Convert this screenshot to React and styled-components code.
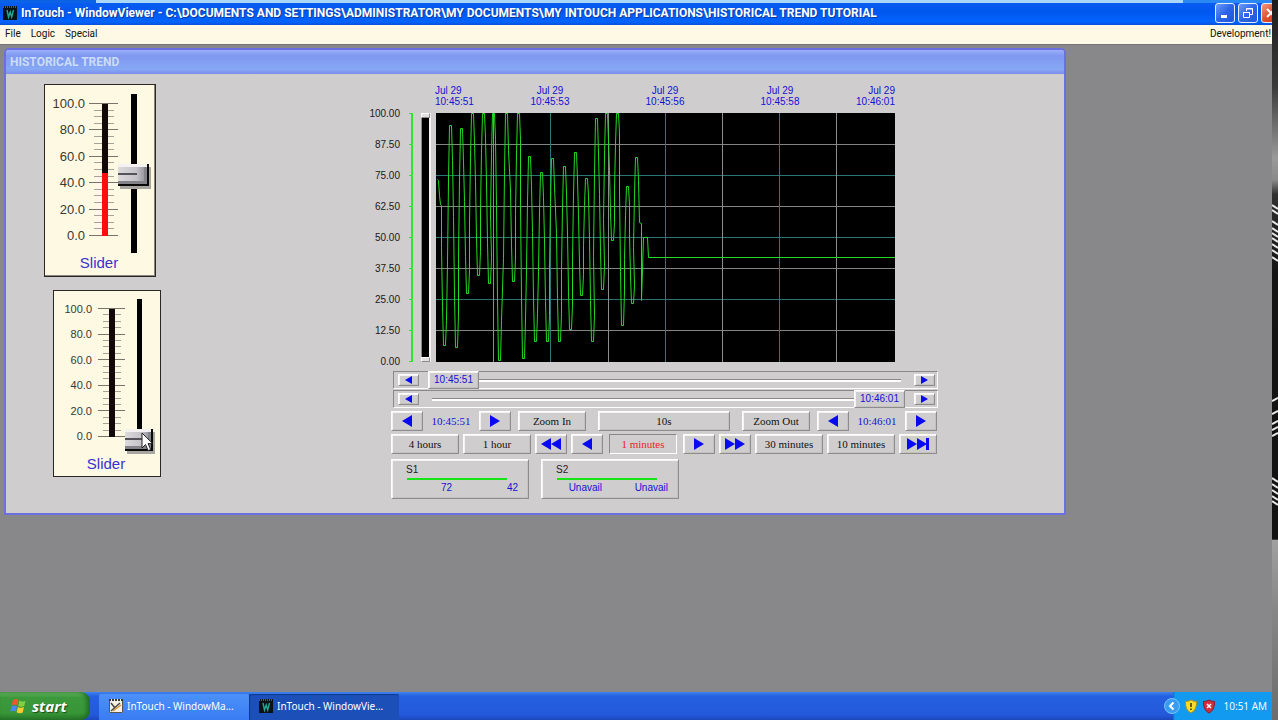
import React from "react";
import styled, { createGlobalStyle, css } from "styled-components";

const GlobalStyle = createGlobalStyle`
  * { box-sizing: border-box; }
  html, body, #root { height: 100%; }
  body { margin: 0; overflow: hidden; font-family: "Liberation Sans", Arial, sans-serif; font-size: 10px; }
  button, input { font: inherit; margin: 0; }
`;

const BLUE = "#1410d8";
const FACE = "#d0cdce";

const raised = css`
  border: 1px solid;
  border-color: #fff #8f8c8e #8f8c8e #fff;
  box-shadow: inset 1px 1px 0 #f5f3f3, inset -1px -1px 0 #c4c1c3;
`;
const sunken = css`
  border: 1px solid;
  border-color: #8a888a #fff #fff #8a888a;
`;

/* ---------- screen ---------- */

const Screen = styled.div`
  display: flex;
  height: 100vh;
`;
const Desktop = styled.div`
  flex: 1;
  min-width: 0;
  display: flex;
  flex-direction: column;
  background: #888789;
`;
const Wallpaper = styled.svg`
  position: relative;
  width: 6px;
  height: 100%;
  flex: none;
`;

/* ---------- application frame ---------- */

const TopEdge = styled.div`
  height: 3px;
  background: linear-gradient(90deg, #0a62e4 96px, #a9d8f8 96px, #a9d8f8 93%, #2a88f4 93%);
`;
const TitleBar = styled.header`
  height: 22px;
  display: flex;
  align-items: center;
  gap: 4px;
  padding: 0 0 2px 3px;
  overflow: hidden;
  background: linear-gradient(#0a5cf0, #0057ee 40%, #0264ff 85%, #0a50d8);
`;
const Title = styled.h1`
  flex: 1;
  margin: 0;
  font: bold 12px/18px Roboto, "Open Sans", sans-serif;
  color: #fff;
  text-shadow: 1px 1px 0 #0a3a9c;
  white-space: pre;
`;
const WindowButtons = styled.div`
  display: flex;
  gap: 3px;
  margin-right: -9px;
`;
const WindowButton = styled.button`
  width: 20px;
  height: 20px;
  padding: 0;
  display: grid;
  place-items: center;
  border: 1px solid #e4ecff;
  border-radius: 3px;
  background: ${(p) =>
    p.$close
      ? "linear-gradient(135deg, #f09a80, #e0502c 50%, #c83a18)"
      : "linear-gradient(135deg, #6c9cf8, #2c64e8 50%, #2058dc)"};
`;
const MenuBar = styled.nav`
  height: 19px;
  display: flex;
  align-items: center;
  gap: 10px;
  padding: 0 1px 2px 5px;
  background: #fdf9e4;
`;
const MenuItem = styled.button`
  padding: 0;
  border: 0;
  background: none;
  color: #111;
  font: 10px/14px Roboto, sans-serif;
  margin-left: ${(p) => (p.$end ? "auto" : "0")};
`;
const Workspace = styled.main`
  flex: 1;
  min-height: 0;
  padding: 3px 4px;
  border-top: 1px solid #74737a;
`;

/* ---------- trend window ---------- */

const TrendWindow = styled.section`
  width: 84%;
  border: 2px solid #6c6fe2;
  border-radius: 5px 5px 0 0;
  background: ${FACE};
  overflow: hidden;
`;
const TrendTitle = styled.h2`
  margin: 0;
  height: 24px;
  padding: 0 4px;
  font: bold 12px/24px Roboto, "Open Sans", sans-serif;
  color: #ccdcf8;
  background: linear-gradient(#9ab0fa, #7f97f0 25%, #86a8f4 80%, #7d8eec);
`;
const TrendBody = styled.div`
  display: grid;
  grid-template-columns: 325px minmax(0, 570px);
  padding: 10px 0 14px 38px;
`;
const GaugeColumn = styled.div`
  display: flex;
  flex-direction: column;
  align-items: flex-start;
  gap: 13px;
`;

/* ---------- gauges ---------- */

const GaugeCard = styled.div`
  width: ${(p) => (p.$small ? 108 : 112)}px;
  margin-left: ${(p) => (p.$small ? 9 : 0)}px;
  padding: ${(p) => (p.$small ? "8px 0 2px" : "9px 0 3px")};
  border: 1px solid #2a2824;
  background: #fdf9e3;
  box-shadow: ${(p) => (p.$small ? "none" : "inset -1px -1px 0 #8a867e")};
`;
const GaugeRow = styled.div`
  display: flex;
  height: ${(p) => (p.$small ? 155 : 159)}px;
`;
const GaugeLabels = styled.div`
  width: ${(p) => (p.$small ? 38 : 40)}px;
  margin-right: ${(p) => (p.$small ? 6 : 4)}px;
  padding: ${(p) => (p.$small ? "2px 0 10px" : "2px 0 9px")};
  display: flex;
  flex-direction: column;
  justify-content: space-between;
  text-align: right;
  font-size: ${(p) => (p.$small ? 11 : 13)}px;
  line-height: 16px;
  color: #3a3834;
`;
const GaugeScale = styled.svg`
  flex: none;
  display: block;
  margin-top: 9px;
`;
const GaugeCaption = styled.label`
  display: block;
  padding-right: 2px;
  text-align: center;
  font-size: 15px;
  line-height: 20px;
  color: #3a30d0;
`;
const KnobWrap = styled.div`
  position: relative;
  display: flex;
`;
const Knob = styled.input`
  appearance: none;
  writing-mode: vertical-lr;
  direction: rtl;
  width: ${(p) => (p.$small ? 28 : 31)}px;
  height: 100%;
  background: linear-gradient(#000, #000) center / ${(p) => (p.$small ? 5 : 6)}px 100% no-repeat;
  &::-webkit-slider-thumb {
    appearance: none;
    width: ${(p) => (p.$small ? 28 : 31)}px;
    height: 22px;
    border: 0 solid #0a0a0a;
    border-width: 0 2px 2px 0;
    background:
      linear-gradient(#55535a, #55535a) 0 9px / 19px 2px no-repeat,
      linear-gradient(90deg, #dcdadc, #c4c2c8 65%, #8c8a92);
    box-shadow: inset 0 3px 0 #f4f2f0, inset -3px -3px 0 #85838a, 2px 3px 0 #a9a6a2;
  }
`;
const Cursor = styled.svg`
  position: absolute;
  left: 16px;
  bottom: 2px;
  pointer-events: none;
`;

function Gauge({ id, small, fill, value, cursor }) {
  const w = small ? 27 : 29;
  const h = small ? 130 : 134;
  const step = (h - 2) / 20;
  const barX = small ? 11 : 13;
  return (
    <GaugeCard $small={small}>
      <GaugeRow $small={small}>
        <GaugeLabels $small={small}>
          {["100.0", "80.0", "60.0", "40.0", "20.0", "0.0"].map((t) => (
            <span key={t}>{t}</span>
          ))}
        </GaugeLabels>
        <GaugeScale width={w} height={h} shapeRendering="crispEdges" aria-hidden="true">
          {Array.from({ length: 21 }, (_, i) => (
            <rect
              key={i}
              x={i % 4 ? 5 : 0}
              y={Math.round(i * step)}
              width={i % 4 ? w - 9 : w}
              height="1"
              fill={i % 4 ? "#a6a297" : "#77746c"}
            />
          ))}
          <rect x={barX} y="1" width="6" height={h - 2} fill="#120808" />
          <rect x={barX} y={1 + (h - 2) * (1 - fill)} width="6" height={(h - 2) * fill} fill="#fb0d0d" />
        </GaugeScale>
        <KnobWrap>
          <Knob id={id} type="range" min="0" max="100" defaultValue={value} $small={small} />
          {cursor && (
            <Cursor width="13" height="20" viewBox="0 0 13 20" aria-hidden="true">
              <path d="M1 1v15l3.500-3.400 2.600 6 2.600-1.100-2.600-5.900h4.600z" fill="#fff" stroke="#222" />
            </Cursor>
          )}
        </KnobWrap>
      </GaugeRow>
      <GaugeCaption htmlFor={id}>Slider</GaugeCaption>
    </GaugeCard>
  );
}

/* ---------- chart ---------- */

const TimeAxis = styled.div`
  display: grid;
  grid-template-columns: 1fr 2fr 2fr 2fr 1fr;
  margin: 1px 44px 6px 66px;
  line-height: 11px;
  text-align: center;
  color: ${BLUE};
  & > :first-child { text-align: left; }
  & > :last-child { text-align: right; }
`;
const TimeMark = styled.div`
  white-space: pre-line;
`;
const Plot = styled.div`
  display: flex;
  height: 249px;
`;
const ValueAxis = styled.div`
  width: 31px;
  margin: -4px 0 -5px;
  display: flex;
  flex-direction: column;
  justify-content: space-between;
  text-align: right;
  line-height: 10px;
  color: #181818;
`;
const AxisRule = styled.svg`
  flex: none;
  width: 5px;
  margin: 0 7px 0 9px;
`;
const Scooter = styled.div`
  width: 10px;
  margin-right: 5px;
  display: flex;
  flex-direction: column;
  justify-content: space-between;
  border-right: 2px solid #f4f2f2;
  border-left: 1px solid #8a888a;
  background: #000;
`;
const ScooterHandle = styled.button`
  width: 9px;
  height: 5px;
  padding: 0;
  margin-left: -1px;
  background: #e2e0e0;
  border: 1px solid;
  border-color: #fff #8f8c8e #8f8c8e #fff;
`;
const Chart = styled.svg`
  flex: 1;
  min-width: 0;
  height: 249px;
  margin-right: 44px;
  background: #000;
`;

const EXTREMA = [
  [8, 232], [14, 12], [20, 234], [25, 15], [31, 180], [36, 0], [42, 162], [47, 0],
  [53, 170], [57, 0], [63, 247], [70, 0], [77, 168], [82, 0], [87, 245], [93, 43],
  [99, 228], [105, 59], [111, 228], [116, 45], [123, 228], [128, 53], [134, 216],
  [139, 39], [145, 182], [150, 65], [156, 228], [160, 5], [166, 176], [170, 0],
  [176, 127], [181, 0], [186, 212], [191, 73], [196, 190], [200, 44],
];

function tracePath() {
  let d = "M1 66L2 67L3 82L4 91L5 92";
  let prev = 92;
  EXTREMA.forEach(([x, y]) => {
    const span = y - prev;
    d += `L${x - 3} ${prev + span * 0.3}L${x - 2} ${prev + span * 0.72}L${x - 1} ${y}L${x + 1} ${y}L${x + 2} ${y - span * 0.18}`;
    prev = y - span * 0.18;
  });
  return `${d}L203 109L205 110L205 187L207 124L211 124L212 144L459 144`;
}
const TRACE = tracePath();

/* ---------- scroll bars and tool rows ---------- */

const Controls = styled.div`
  width: 547px;
  max-width: 100%;
  margin: 9px 0 0 22px;
`;
const ScrollBar = styled.div`
  height: 18px;
  margin: 0 0 1px 2px;
  display: flex;
  align-items: center;
  padding: 0 2px 0 4px;
  ${sunken}
`;
const ArrowButton = styled.button`
  width: 21px;
  height: 12px;
  padding: 0;
  display: grid;
  place-items: center;
  background: ${FACE};
  ${raised}
`;
const RangeWrap = styled.div`
  position: relative;
  flex: 1;
  display: flex;
  height: 18px;
  margin: 0 9px;
`;
const Range = styled.input`
  appearance: none;
  width: 100%;
  height: 18px;
  background: linear-gradient(#8a888a 1px, #fff 1px) 4px 8px / calc(100% - 8px) 3px no-repeat;
  &::-webkit-slider-thumb {
    appearance: none;
    width: 51px;
    height: 18px;
    background: ${FACE};
    ${raised}
  }
`;
const RangeText = styled.output`
  position: absolute;
  top: 0;
  ${(p) => (p.$end ? "right" : "left")}: 0;
  width: 51px;
  text-align: center;
  line-height: 18px;
  color: ${BLUE};
  pointer-events: none;
`;
const ToolRow = styled.div`
  display: flex;
  align-items: center;
  gap: ${(p) => p.$gap}px;
  margin-top: ${(p) => p.$top}px;
  font: 11px/16px "Liberation Serif", "Times New Roman", serif;
`;
const StepGroup = styled.div`
  width: 120px;
  display: flex;
  align-items: center;
  justify-content: space-between;
  color: ${BLUE};
`;
const ToolButton = styled.button`
  width: ${(p) => p.$w || 32}px;
  height: 20px;
  padding: 0;
  display: flex;
  align-items: center;
  justify-content: center;
  background: ${FACE};
  color: #111;
  ${raised}
`;
const Readout = styled.div`
  width: ${(p) => p.$w}px;
  height: 20px;
  margin: 0 ${(p) => p.$m}px;
  line-height: 18px;
  text-align: center;
  color: ${(p) => (p.$alert ? "#ee1c24" : "#111")};
  ${(p) => (p.$alert ? sunken : raised)}
`;

/* ---------- pen legend ---------- */

const Legend = styled.div`
  display: flex;
  gap: 12px;
  margin-top: 5px;
`;
const Pen = styled.div`
  width: 138px;
  height: 40px;
  padding: 4px 9px 0 14px;
  ${raised}
`;
const PenName = styled.div`
  line-height: 12px;
  color: #222;
`;
const PenLine = styled.div`
  height: 2px;
  margin: 2px 12px 3px 1px;
  background: #17e417;
`;
const PenValues = styled.div`
  display: grid;
  grid-template-columns: 46px 66px;
  line-height: 10px;
  text-align: right;
  color: ${BLUE};
`;

/* ---------- taskbar ---------- */

const Taskbar = styled.footer`
  height: 28px;
  display: flex;
  background: linear-gradient(#3f82f0, #2460e0 15%, #2459dc 80%, #1c48bc);
`;
const StartButton = styled.button`
  width: 90px;
  padding: 0 0 0 10px;
  display: flex;
  align-items: center;
  gap: 5px;
  border: 0;
  border-radius: 0 9px 9px 0;
  background: linear-gradient(#6cbc68, #3c983c 20%, #379637 75%, #2a782a);
  box-shadow: inset -3px 0 4px #1e6a24;
  color: #fff;
  font: italic bold 15px/20px "Open Sans", "Noto Sans", sans-serif;
  text-shadow: 1px 1px 1px #1c4a1c;
`;
const TaskButtons = styled.div`
  flex: 1;
  display: flex;
  padding: 2px 0 0 9px;
`;
const TaskButton = styled.button`
  width: 150px;
  padding: 0 0 2px 10px;
  display: flex;
  align-items: center;
  gap: 4px;
  border: 0;
  border-radius: 2px 2px 0 0;
  background: ${(p) => (p.$active ? "#1c50b8" : "linear-gradient(#4c90fa, #3a7cf2)")};
  box-shadow: ${(p) => (p.$active ? "inset 1px 1px 1px #123a90" : "none")};
  color: #fff;
  font: 10px/14px "Noto Sans", sans-serif;
`;
const Tray = styled.div`
  display: flex;
  align-items: center;
  gap: 4px;
  padding: 0 5px 0 0;
  background: linear-gradient(90deg, transparent 9px, #0c6cc8 9px, #129af0 11px);
  color: #fff;
  font: 10px/14px "Open Sans", sans-serif;
`;
const TrayButton = styled.button`
  padding: 0;
  border: 0;
  background: none;
  display: flex;
`;
const Clock = styled.time`
  margin-left: 4px;
`;

/* ---------- drawings ---------- */

function Arrows({ dir = "right", count = 1, small, bar }) {
  const w = small ? 7 : 10;
  const h = small ? 8 : 12;
  const total = w * count + (bar ? 2 : 0);
  return (
    <svg width={total} height={h} fill="#0a0af0" aria-hidden="true">
      {Array.from({ length: count }, (_, i) => {
        const x = i * w;
        const points =
          dir === "right" ? `${x},0 ${x + w},${h / 2} ${x},${h}` : `${x + w},0 ${x},${h / 2} ${x + w},${h}`;
        return <polygon key={i} points={points} />;
      })}
      {bar && <rect x={total - 3} width="3" height={h} />}
    </svg>
  );
}

function AppIcon({ size = 14 }) {
  return (
    <svg width={size} height={size} viewBox="0 0 14 14" aria-hidden="true">
      <rect width="14" height="14" fill="#0a1216" />
      <path d="M0 1h14" stroke="#8ab0c0" strokeDasharray="1 1" />
      <path d="M4 4l1.500 7 1.700-5 1.500 5L10.500 4" fill="none" stroke="#20a898" strokeWidth="1.400" />
    </svg>
  );
}

function MakerIcon() {
  return (
    <svg width="14" height="14" viewBox="0 0 14 14" aria-hidden="true">
      <rect width="14" height="14" fill="#f4f0e4" />
      <path d="M0 1h14" stroke="#333" strokeWidth="2" strokeDasharray="2 1" />
      <path d="M2 4l4 5M2 12L11 4" stroke="#4a4440" strokeWidth="1.500" />
      <path d="M4 12l8-6" stroke="#d89838" strokeWidth="1.500" />
      <path d="M.5 2v11.500h13V2" fill="none" stroke="#555" />
    </svg>
  );
}

function FlagIcon() {
  return (
    <svg width="17" height="17" viewBox="0 0 17 17" aria-hidden="true">
      <path d="M3 2q3-2 5.500 0L7.300 7.500Q5 5.600 1.700 7.300z" fill="#f0582c" />
      <path d="M9.300 2.500q3 1.800 6.200.2L14.200 8q-3 1.600-6-.1z" fill="#86cc44" />
      <path d="M1.500 8.300Q4.500 6.800 7 8.400L5.700 13.800Q3.300 12 .2 13.600z" fill="#4a88f0" />
      <path d="M7.900 8.900q3 1.700 6.100.2L12.700 14.500q-3 1.600-6.100-.2z" fill="#f8cc30" />
    </svg>
  );
}

function Shield({ color, edge, bad }) {
  return (
    <svg width="14" height="15" viewBox="0 0 14 15" aria-hidden="true">
      <path d="M7 1q2.500 1.600 5.500 1.400Q13 11 7 14 1 11 1.500 2.400 4.500 2.600 7 1z" fill={color} stroke={edge} />
      {bad ? (
        <path d="M5 5l4 4M9 5L5 9" stroke="#fff" strokeWidth="1.500" />
      ) : (
        <path d="M7 4v4M7 9.500V11" stroke="#3a3000" strokeWidth="1.500" />
      )}
    </svg>
  );
}

function ScrollRow({ name, value, time, end }) {
  return (
    <ScrollBar>
      <ArrowButton aria-label={`${name} back`}><Arrows dir="left" small /></ArrowButton>
      <RangeWrap>
        <Range type="range" aria-label={name} defaultValue={value} />
        <RangeText $end={end}>{time}</RangeText>
      </RangeWrap>
      <ArrowButton aria-label={`${name} forward`}><Arrows small /></ArrowButton>
    </ScrollBar>
  );
}

function Stepper({ time }) {
  return (
    <StepGroup>
      <ToolButton aria-label="Earlier"><Arrows dir="left" /></ToolButton>
      <span>{time}</span>
      <ToolButton aria-label="Later"><Arrows /></ToolButton>
    </StepGroup>
  );
}

const TIMES = ["10:45:51", "10:45:53", "10:45:56", "10:45:58", "10:46:01"];
const VALUES = ["100.00", "87.50", "75.00", "62.50", "50.00", "37.50", "25.00", "12.50", "0.00"];
const PENS = [
  { name: "S1", values: ["72", "42"] },
  { name: "S2", values: ["Unavail", "Unavail"] },
];

export default function App() {
  return (
    <Screen>
      <GlobalStyle />
      <Desktop>
        <TopEdge />
        <TitleBar>
          <AppIcon />
          <Title>{"InTouch - WindowViewer - C:\\DOCUMENTS AND SETTINGS\\ADMINISTRATOR\\MY DOCUMENTS\\MY INTOUCH APPLICATIONS\\HISTORICAL TREND TUTORIAL"}</Title>
          <WindowButtons>
            <WindowButton aria-label="Minimize">
              <svg width="12" height="12"><path d="M2 9.500h6" stroke="#fff" strokeWidth="3" /></svg>
            </WindowButton>
            <WindowButton aria-label="Restore">
              <svg width="12" height="12" fill="none" stroke="#fff"><path d="M4.500 4V1.500h6v6H8M4 2h7" /><path d="M1.500 5.500h6v5h-6zM1 5.500h7" /></svg>
            </WindowButton>
            <WindowButton $close aria-label="Close">
              <svg width="12" height="12"><path d="M2 2l8 8M10 2L2 10" stroke="#fff" strokeWidth="2" /></svg>
            </WindowButton>
          </WindowButtons>
        </TitleBar>
        <MenuBar>
          <MenuItem>File</MenuItem>
          <MenuItem>Logic</MenuItem>
          <MenuItem>Special</MenuItem>
          <MenuItem $end>Development!</MenuItem>
        </MenuBar>

        <Workspace>
          <TrendWindow>
            <TrendTitle>HISTORICAL TREND</TrendTitle>
            <TrendBody>
              <GaugeColumn>
                <Gauge id="slider-1" fill={0.48} value={49} />
                <Gauge id="slider-2" small fill={0} value={2} cursor />
              </GaugeColumn>
              <div>
                <TimeAxis>
                  {TIMES.map((t) => (
                    <TimeMark key={t}>{`Jul 29\n${t}`}</TimeMark>
                  ))}
                </TimeAxis>
                <Plot>
                  <ValueAxis>
                    {VALUES.map((v) => (
                      <span key={v}>{v}</span>
                    ))}
                  </ValueAxis>
                  <AxisRule height="249" fill="#2ee62e" shapeRendering="crispEdges" aria-hidden="true">
                    <rect x="2" width="2" height="249" />
                    {VALUES.map((v, i) => (
                      <rect key={v} y={i * 31} width="4" height="1" />
                    ))}
                  </AxisRule>
                  <Scooter>
                    <ScooterHandle aria-label="Upper limit" />
                    <ScooterHandle aria-label="Lower limit" />
                  </Scooter>
                  <Chart viewBox="0 0 459 249" preserveAspectRatio="none" role="img" aria-label="S1 trend">
                    <g shapeRendering="crispEdges">
                      {[1, 2, 3, 4, 5, 6, 7].map((i) => (
                        <rect key={`h${i}`} y={i * 31} width="459" height="1" fill={i % 2 ? "#858585" : "#2a7474"} />
                      ))}
                      {[1, 2, 3, 4, 5, 6, 7].map((i) => (
                        <rect key={`v${i}`} x={Math.round(i * 57.2)} width="1" height="249" fill={i % 2 ? "#8c8c8c" : "#2a7878"} />
                      ))}
                    </g>
                    <path d={TRACE} fill="none" stroke="#22dc22" transform="translate(.5 .5)" />
                  </Chart>
                </Plot>

                <Controls>
                  <ScrollRow name="Start time" value={0} time="10:45:51" />
                  <ScrollRow name="End time" value={100} time="10:46:01" end />
                  <ToolRow $gap={7} $top={3}>
                    <Stepper time="10:45:51" />
                    <ToolButton $w={68}>Zoom In</ToolButton>
                    <Readout $w={132} $m={5}>10s</Readout>
                    <ToolButton $w={68}>Zoom Out</ToolButton>
                    <Stepper time="10:46:01" />
                  </ToolRow>
                  <ToolRow $gap={4} $top={3}>
                    <ToolButton $w={68}>4 hours</ToolButton>
                    <ToolButton $w={68}>1 hour</ToolButton>
                    <ToolButton aria-label="Fast back"><Arrows dir="left" count={2} /></ToolButton>
                    <ToolButton aria-label="Back"><Arrows dir="left" /></ToolButton>
                    <Readout $w={68} $m={2} $alert>1 minutes</Readout>
                    <ToolButton aria-label="Forward"><Arrows /></ToolButton>
                    <ToolButton aria-label="Fast forward"><Arrows count={2} /></ToolButton>
                    <ToolButton $w={68}>30 minutes</ToolButton>
                    <ToolButton $w={68}>10 minutes</ToolButton>
                    <ToolButton $w={38} aria-label="Go to end"><Arrows count={2} bar /></ToolButton>
                  </ToolRow>
                  <Legend>
                    {PENS.map((pen) => (
                      <Pen key={pen.name}>
                        <PenName>{pen.name}</PenName>
                        <PenLine />
                        <PenValues>
                          <span>{pen.values[0]}</span>
                          <span>{pen.values[1]}</span>
                        </PenValues>
                      </Pen>
                    ))}
                  </Legend>
                </Controls>
              </div>
            </TrendBody>
          </TrendWindow>
        </Workspace>

        <Taskbar>
          <StartButton><FlagIcon />start</StartButton>
          <TaskButtons>
            <TaskButton><MakerIcon />InTouch - WindowMa...</TaskButton>
            <TaskButton $active><AppIcon />InTouch - WindowVie...</TaskButton>
          </TaskButtons>
          <Tray>
            <TrayButton aria-label="Show hidden icons">
              <svg width="16" height="16">
                <circle cx="8" cy="8" r="7.500" fill="#3a9cf0" stroke="#7cc4f8" />
                <path d="M9.500 4.500L6 8l3.500 3.500" fill="none" stroke="#fff" strokeWidth="2" />
              </svg>
            </TrayButton>
            <Shield color="#f8dc28" edge="#a89020" />
            <Shield color="#d42c3c" edge="#8c1c28" bad />
            <Clock>10:51 AM</Clock>
          </Tray>
        </Taskbar>
      </Desktop>
      <Wallpaper viewBox="0 0 6 720" preserveAspectRatio="none" aria-hidden="true">
        <defs>
          <linearGradient id="wall" x1="0" y1="0" x2="0" y2="1">
            <stop offset="0" stopColor="#1c1c1c" />
            <stop offset=".12" stopColor="#3a3a3a" />
            <stop offset=".17" stopColor="#6a6a6a" />
            <stop offset=".22" stopColor="#9a9a9a" />
            <stop offset=".25" stopColor="#8a8a8a" />
            <stop offset=".27" stopColor="#303030" />
            <stop offset=".38" stopColor="#141414" />
            <stop offset=".749" stopColor="#121212" />
            <stop offset=".75" stopColor="#a0a0a0" />
            <stop offset=".85" stopColor="#868686" />
            <stop offset="1" stopColor="#6c6c6c" />
          </linearGradient>
        </defs>
        <rect width="6" height="720" fill="url(#wall)" />
        <g stroke="#e8e8e8" strokeWidth="2">
          {[205, 210, 221, 228, 233, 238, 244, 250, 257].map((y) => (
            <path key={y} d={`M0 ${y}l6 4`} />
          ))}
          {[401, 414, 424, 430, 436, 478, 484, 490, 496, 501].map((y) => (
            <path key={y} d={`M0 ${y}l6 ${y < 470 ? -3 : 4}`} />
          ))}
        </g>
      </Wallpaper>
    </Screen>
  );
}
